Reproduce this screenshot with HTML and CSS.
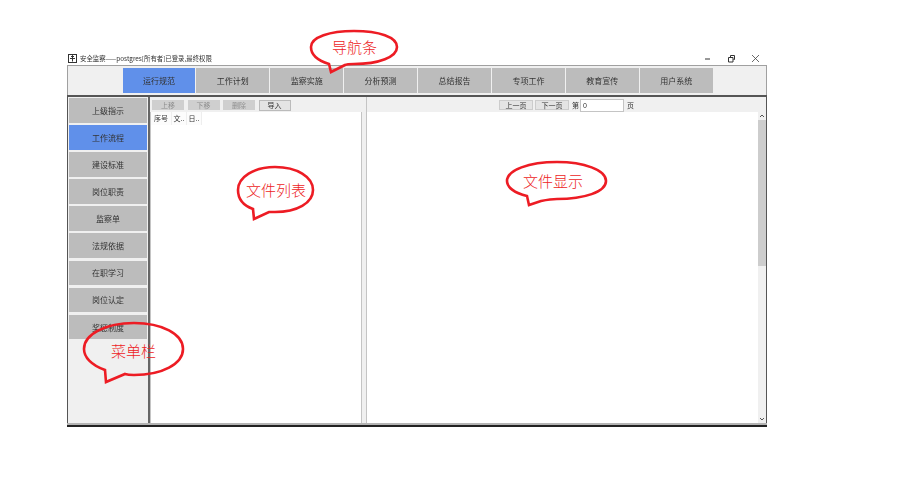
FILE: index.html
```html
<!DOCTYPE html>
<html lang="en">
<head>
    <meta charset="UTF-8">
    <meta name="viewport" content="width=device-width, initial-scale=1.0">
    <title>安全监察</title>
    <link rel="stylesheet" href="styles.css">
</head>
<body>
    <div class="window">
        <div class="titlebar">
            <svg class="app-icon" width="9" height="9" viewBox="0 0 9 9">
                <rect x="0.5" y="0.5" width="8" height="8" fill="#fff" stroke="#333"/>
                <path d="M4.5 1.5v6M2 4.5h5M3 3l1.5-1.5L6 3" fill="none" stroke="#333"/>
            </svg>
            <span class="app-title">安全监察——postgres[所有者]已登录,最终权限</span>
            <div class="win-controls">
                <svg width="9" height="9" viewBox="0 0 9 9"><path d="M2 5h5" stroke="#333"/></svg>
                <svg width="9" height="9" viewBox="0 0 9 9"><path d="M1.500 3.500h4.500v4.500h-4.500zM3.500 3V1.500H7.500V5.500H6.500" fill="none" stroke="#333"/></svg>
                <svg width="9" height="9" viewBox="0 0 9 9"><path d="M1 1l7 7M8 1l-7 7" stroke="#444" stroke-width="0.8"/></svg>
            </div>
        </div>

        <nav class="topnav">
            <a class="nav-btn active">运行规范</a>
            <a class="nav-btn">工作计划</a>
            <a class="nav-btn">监察实施</a>
            <a class="nav-btn">分析预测</a>
            <a class="nav-btn">总结报告</a>
            <a class="nav-btn">专项工作</a>
            <a class="nav-btn">教育宣传</a>
            <a class="nav-btn">用户系统</a>
        </nav>

        <div class="main">
            <aside class="sidebar">
                <a class="side-btn">上级指示</a>
                <a class="side-btn active">工作流程</a>
                <a class="side-btn">建设标准</a>
                <a class="side-btn">岗位职责</a>
                <a class="side-btn">监察单</a>
                <a class="side-btn">法规依据</a>
                <a class="side-btn">在职学习</a>
                <a class="side-btn">岗位认定</a>
                <a class="side-btn">奖惩制度</a>
            </aside>

            <section class="files">
                <div class="files-toolbar">
                    <button class="tool-btn" disabled>上移</button>
                    <button class="tool-btn" disabled>下移</button>
                    <button class="tool-btn" disabled>删除</button>
                    <button class="tool-btn outlined">导入</button>
                </div>
                <div class="file-list">
                    <div class="file-head">
                        <span class="col-no">序号</span>
                        <span class="col-name">文..</span>
                        <span class="col-date">日..</span>
                    </div>
                </div>
            </section>

            <section class="viewer">
                <div class="viewer-toolbar">
                    <button class="page-btn">上一页</button>
                    <button class="page-btn">下一页</button>
                    <span class="page-label">第</span>
                    <input class="page-input" type="text" value="0">
                    <span class="page-label">页</span>
                </div>
                <div class="viewer-body">
                    <div class="doc"></div>
                    <div class="scrollbar">
                        <svg class="arrow" width="8" height="8" viewBox="0 0 8 8"><path d="M2 5l2-2 2 2" fill="none" stroke="#555"/></svg>
                        <div class="thumb"></div>
                        <svg class="arrow arrow-down" width="8" height="8" viewBox="0 0 8 8"><path d="M2 3l2 2 2-2" fill="none" stroke="#555"/></svg>
                    </div>
                </div>
            </section>
        </div>
        <div class="window-bottom"></div>
    </div>

    <!-- hand drawn callouts on top of the screenshot -->
    <svg class="callouts" width="922" height="488" viewBox="0 0 922 488">
        <path class="bubble" d="M329 64C316 60 311 54 311 47C311 37 330 31 354 31C379 31 397 37 397 47C397 57 379 64 354 64C350 64 347 64 345 65L331 72Z"/>
        <text class="bubble-text" x="332" y="53">导航条</text>

        <path class="bubble" d="M105 370C91 365 84 357 84 349C84 334 106 323 134 323C162 323 183 334 183 349C183 364 162 375 134 375C130 375 128 375 125 374L106 382Z"/>
        <text class="bubble-text" x="111" y="357">菜单栏</text>

        <path class="bubble" d="M253 209C242 205 238 198 238 190C238 177 254 167 275 167C297 167 313 177 313 190C313 203 297 212 275 212C273 212 271 212 269 212L254 219Z"/>
        <text class="bubble-text" x="246" y="196">文件列表</text>

        <path class="bubble" d="M527 196C514 193 507 187 507 181C507 170 529 162 557 162C584 162 606 170 606 181C606 192 584 199 557 199C551 199 546 200 541 201L529 205Z"/>
        <text class="bubble-text" x="523" y="187">文件显示</text>
    </svg>
</body>
</html>
```

FILE: styles.css
```css
* {
  box-sizing: border-box;
  margin: 0;
  padding: 0;
}

body {
  position: relative;
  width: 922px;
  height: 488px;
  overflow: hidden;
  background-color: #fff;
  font-family: "Noto Sans CJK SC", "Liberation Sans", sans-serif;
  font-size: 8px;
  color: #333;
}

.window {
  width: 700px;
  margin: 52px 0 0 67px;
  filter: blur(0.3px);
}

/* Title bar */
.titlebar {
  display: flex;
  align-items: center;
  height: 13px;
  padding-left: 1px;
}

.app-icon {
  margin-right: 3px;
}

.app-title {
  font-size: 6.400px;
  line-height: 13px;
  white-space: nowrap;
}

.win-controls {
  display: flex;
  gap: 15px;
  margin-left: auto;
  margin-right: 7px;
}

/* Top navigation */
.topnav {
  display: flex;
  gap: 1px;
  height: 30px;
  padding: 2px 0 2px 54.500px;
  background-color: #f0f0f0;
  border: 1px solid #a0a0a0;
  border-bottom: 0;
}

.nav-btn {
  display: flex;
  align-items: center;
  justify-content: center;
  width: 72.900px;
  background-color: #bcbcbc;
}

.nav-btn.active {
  background-color: #6090ea;
}

/* Main area */
.main {
  display: flex;
  height: 328px;
  background-color: #f0f0f0;
  border: 1px solid #555;
  border-top-width: 2px;
  border-bottom: 0;
}

.window-bottom {
  height: 4px;
  background-color: #f0f0f0;
  border-top: 2px solid #b4b4b4;
  border-bottom: 2px solid #222;
}

.sidebar {
  display: flex;
  flex-direction: column;
  gap: 2.600px;
  width: 82px;
  padding: 1px 1px 0 1px;
  border-right: 2px solid #666;
}

.side-btn {
  display: flex;
  align-items: center;
  justify-content: center;
  height: 24.500px;
  background-color: #bcbcbc;
}

.side-btn.active {
  background-color: #6090ea;
}

/* File list */
.files {
  display: flex;
  flex-direction: column;
  width: 215px;
}

.files-toolbar {
  display: flex;
  align-items: center;
  gap: 3.500px;
  height: 15px;
  padding: 1px 0 0 2px;
}

.tool-btn {
  width: 32px;
  height: 10px;
  border: 0;
  background-color: #cfcfcf;
  color: #8e8e8e;
  font-family: inherit;
  font-size: 7px;
  line-height: 10px;
}

.tool-btn.outlined {
  height: 11px;
  background-color: #e4e4e4;
  border: 1px solid #bbb;
  color: #333;
  line-height: 9px;
}

.file-list {
  flex: 1;
  width: 212px;
  background-color: #fff;
  border: 1px solid #c4c4c4;
  border-top: 0;
  border-bottom: 0;
}

.file-head {
  display: flex;
  height: 13px;
  font-size: 7px;
  line-height: 13px;
}

.file-head span {
  background-color: #fcfcfc;
  border-right: 1px solid #eee;
  text-align: center;
}

.col-no {
  width: 21px;
}

.col-name,
.col-date {
  width: 15px;
}

/* File viewer */
.viewer {
  flex: 1;
  display: flex;
  flex-direction: column;
  margin-left: 1px;
  border-left: 1px solid #c4c4c4;
}

.viewer-toolbar {
  display: flex;
  align-items: center;
  justify-content: center;
  height: 15px;
  padding-top: 1px;
}

.page-btn {
  width: 34px;
  height: 10px;
  margin-right: 2px;
  background-color: #e4e4e4;
  border: 1px solid #ccc;
  color: #333;
  font-family: inherit;
  font-size: 7px;
  line-height: 8px;
}

.page-label {
  margin-left: 1px;
  font-size: 7px;
}

.page-input {
  width: 44px;
  height: 13px;
  margin: 0 2px 0 1px;
  padding-left: 2px;
  background-color: #fff;
  border: 1px solid #c4c4c4;
  color: #333;
  font-family: "Liberation Sans", sans-serif;
  font-size: 7px;
}

.viewer-body {
  flex: 1;
  display: flex;
}

.doc {
  flex: 1;
  background-color: #fff;
}

.scrollbar {
  display: flex;
  flex-direction: column;
  align-items: center;
  width: 8px;
  background-color: #f0f0f0;
}

.arrow {
  flex: none;
}

.thumb {
  width: 8px;
  height: 146px;
  background-color: #cdcdcd;
}

.arrow-down {
  margin-top: auto;
}

/* Red callouts */
.callouts {
  position: absolute;
  top: 0;
  left: 0;
}

.bubble {
  fill: none;
  stroke: #ed1c24;
  stroke-width: 2.600;
  stroke-linejoin: miter;
}

.bubble-text {
  fill: #ed1c24;
  font-size: 15px;
  font-weight: 300;
}
```
